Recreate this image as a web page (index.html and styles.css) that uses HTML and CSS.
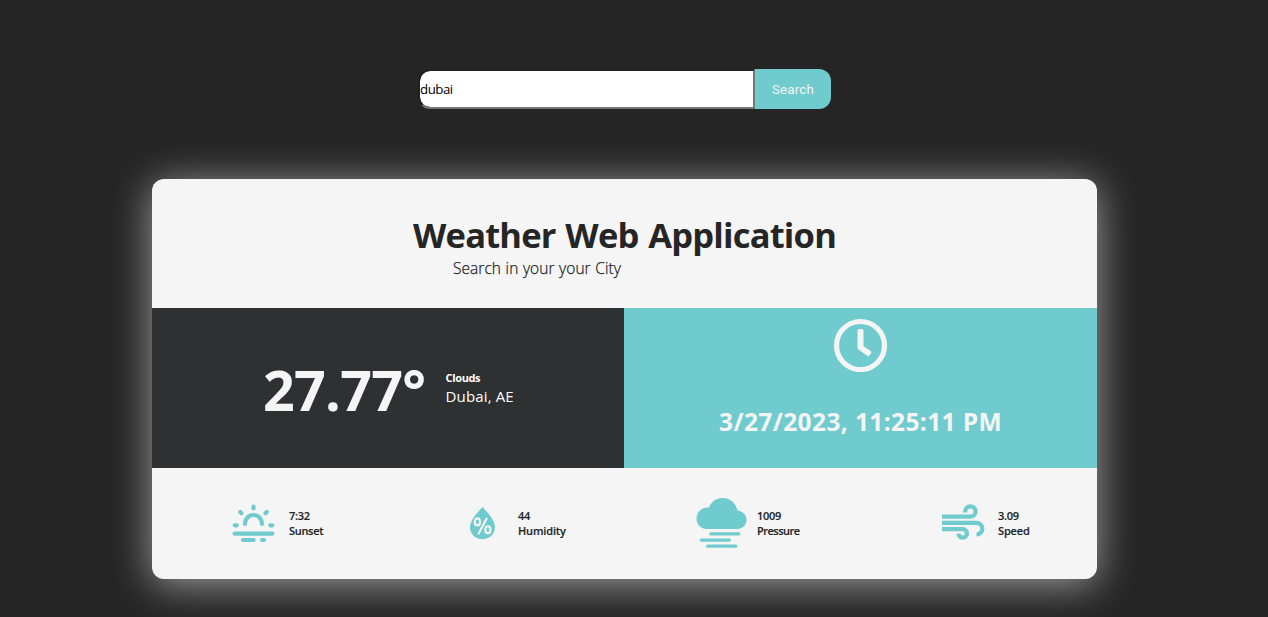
FILE: index.html
```html
<!DOCTYPE html>
<html lang="en">
<head>
<meta charset="utf-8">
<title>Weather Web Application</title>
<link rel="stylesheet" href="styles.css">
</head>
<body>
<form class="search">
  <input class="search-input" type="text" value="dubai">
  <button class="search-button" type="button">Search</button>
</form>
<main class="card">
  <header class="intro">
    <h1 class="title">Weather Web Application</h1>
    <p class="subtitle">Search in your your City</p>
  </header>
  <section class="current">
    <div class="weather">
      <strong class="temperature">27.77°</strong>
      <div class="place">
        <div class="condition">Clouds</div>
        <div class="city">Dubai, AE</div>
      </div>
    </div>
    <div class="clock">
      <svg class="clock-icon" width="55" height="54" viewBox="0 0 55 54" fill="none" stroke="#f5f5f5">
        <circle cx="27.500" cy="27.500" r="24" stroke-width="5.200"/>
        <path transform="translate(.5 0)" d="M24 12.500q0-1.500 1.500-1.500h3q1.500 0 1.500 1.500v15.700l7.300 4.800q1.200.8.400 2l-1.700 2.500q-.8 1.200-2 .4L25 31.500q-1-.7-1-2z" fill="#f5f5f5" stroke="none"/>
      </svg>
      <time class="date">3/27/2023, 11:25:11 PM</time>
    </div>
  </section>
  <section class="stats">
    <div class="stat stat-sunset">
      <svg width="43" height="39" viewBox="0 0 43 39" fill="none" stroke="#70cbce" stroke-width="4.200" stroke-linecap="round">
        <path d="M13 20v-.5a8.500 8.500 0 0 1 17 0v.5M21.500 2.500v2M8.300 8l1.200 1.300M34.700 8l-1.200 1.300M2.700 21.300h2M38.300 21.300h2M2.600 29.600h37.800M11 36h10.600M30 36h2"/>
      </svg>
      <div class="stat-text"><div>7:32</div><div class="label-sunset">Sunset</div></div>
    </div>
    <div class="stat stat-humidity">
      <svg width="27" height="33" viewBox="0 0 27 33">
        <path d="M13.500 0C19 6 26 13 26 20.200c0 7-5.700 12-12.500 12S1 27.200 1 20.200C1 13 8 6 13.500 0z" fill="#70cbce"/>
        <g fill="none" stroke="#f5f5f5" stroke-width="2.100">
          <ellipse cx="8.400" cy="14.900" rx="2.600" ry="3.500"/>
          <ellipse cx="18.900" cy="22.800" rx="2.600" ry="3.500"/>
          <path d="M18 10.800L9.300 27.200"/>
        </g>
      </svg>
      <div class="stat-text"><div>44</div><div class="label-humidity">Humidity</div></div>
    </div>
    <div class="stat stat-pressure">
      <svg width="51" height="51" viewBox="0 0 51 51" fill="#70cbce">
        <path d="M11 31C5 31 .5 26.500 .5 20.500S5 10 11 9.500h2C15 4 20 0 26.500 0 34 0 40 5 41.500 12.500c5 .3 9 4.300 9 9.500 0 5-4 9-9.500 9z"/>
        <path d="M14.800 35.900h28M5.300 42.100h28M11.700 48.200h28" fill="none" stroke="#70cbce" stroke-width="3.200" stroke-linecap="round"/>
      </svg>
      <div class="stat-text"><div>1009</div><div class="label-pressure">Pressure</div></div>
    </div>
    <div class="stat stat-speed">
      <svg width="43" height="39" viewBox="0 0 43 39" fill="none" stroke="#70cbce" stroke-width="4.200">
        <path d="M0 12.700h28.500a5.200 5.200 0 1 0-5.300-5.200v1M0 18.900h34.500a5.800 5.800 0 1 1 0 11.600M0 25.100h20.800a4.300 4.300 0 1 1-4.400 4.600"/>
      </svg>
      <div class="stat-text"><div>3.09</div><div class="label-speed">Speed</div></div>
    </div>
  </section>
</main>
</body>
</html>
```
FILE: styles.css
```css
* { box-sizing: border-box; }
body {
  margin: 0;
  height: 617px;
  overflow: hidden;
  background: #252525;
  color: #212529;
  font-family: "Open Sans", "Noto Sans", sans-serif;
}
.search {
  display: flex;
  width: 413px;
  margin: 69px 0 0 418px;
}
.search-input {
  width: 337px;
  height: 40px;
  padding: 0;
  border: 2px solid;
  border-color: #212121 #767676 #767676 #212121;
  border-radius: 12px 0 0 12px;
  background: #fff;
  background-clip: padding-box;
  color: #000;
  font: 13.3px "Open Sans", sans-serif;
  letter-spacing: -.5px;
  outline: 0;
}
.search-button {
  width: 76px;
  height: 40px;
  padding: 0;
  border: 0;
  border-radius: 0 12px 12px 0;
  background: #70cbce;
  color: #f5f5f5;
  font: 13.3px Roboto, sans-serif;
  letter-spacing: .2px;
}
.card {
  width: 945px;
  height: 400px;
  margin: 70px 0 0 152px;
  border-radius: 12px;
  background: #f5f5f5;
  box-shadow: 0 5px 40px rgba(255, 255, 255, .57);
}
.intro {
  height: 129px;
  padding: 32px 0 0 261px;
}
.title {
  margin: 0;
  color: #252525;
  font-size: 34.5px;
  font-weight: 700;
  line-height: 48px;
  white-space: nowrap;
  letter-spacing: -.8px;
  word-spacing: 1.5px;
}
.subtitle {
  margin: -3px 0 0 40px;
  font-size: 15.5px;
  font-weight: 300;
  line-height: 24px;
  letter-spacing: .05px;
  word-spacing: .5px;
  -webkit-text-stroke: .25px;
}
.current {
  display: grid;
  grid-template-columns: 472px 473px;
  height: 160px;
  color: #f5f5f5;
}
.weather {
  display: flex;
  align-items: center;
  padding-left: 111px;
  background: #2d3132;
}
.temperature {
  width: 182.5px;
  padding-top: 4px;
  font-size: 55.5px;
  line-height: 70px;
  letter-spacing: -.7px;
}
.place { color: #fff; white-space: nowrap; }
.condition { font-size: 11px; font-weight: 700; line-height: 15px; letter-spacing: -.35px; }
.city { font-size: 15px; line-height: 22px; letter-spacing: .15px; }
.clock {
  display: flex;
  flex-direction: column;
  align-items: center;
  padding-top: 10px;
  background: #70cbce;
}
.date {
  margin-top: 33px;
  font-size: 24.5px;
  font-weight: 700;
  line-height: 34px;
  letter-spacing: .38px;
  white-space: nowrap;
}
.stats {
  display: grid;
  grid-template-columns: 237px 227px 246px 155px;
  height: 111px;
  padding-left: 80px;
}
.stat { display: flex; align-items: center; }
.stat-sunset { gap: 14px; }
.stat-humidity { gap: 22px; }
.stat-pressure { gap: 10px; }
.stat-speed { gap: 13px; }
.stat-text {
  padding-bottom: 2px;
  font-size: 11px;
  font-weight: 600;
  line-height: 15px;
  letter-spacing: -.3px;
  white-space: nowrap;
  -webkit-text-stroke: .15px;
}
.label-humidity, .label-speed { letter-spacing: -.15px; }
.label-pressure { letter-spacing: -.5px; }
```
